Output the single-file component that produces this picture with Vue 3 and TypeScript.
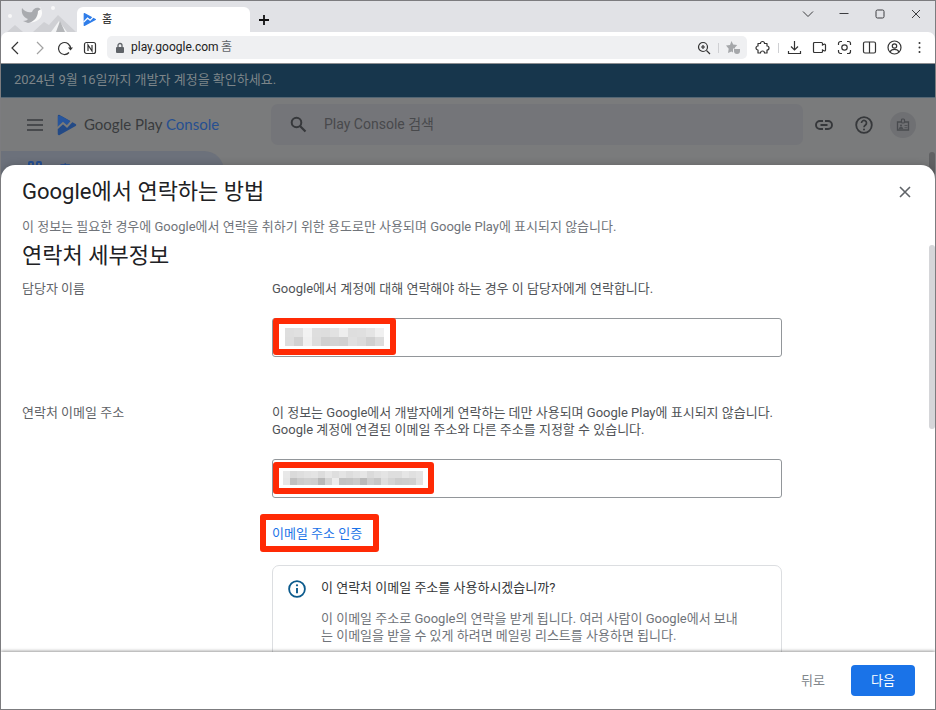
<script setup lang="ts">
import { ref } from 'vue'

interface Cell {
  x: number
  y: number
  fill: string
}

const gray = (v: number): string => `rgb(${v}, ${v}, ${v})`

const toCells = (rows: number[][], size: number): Cell[] =>
  rows.flatMap((row, r) => row.map((v, c) => ({ x: c * size, y: r * size, fill: gray(v) })))

const nameCells = toCells(
  [
    [222, 224, 242, 222, 221, 226, 238, 222, 223, 228, 240],
    [221, 209, 240, 221, 208, 211, 209, 224, 219, 208, 220],
  ],
  9,
)

const mailCells = toCells(
  [
    [232, 218, 222, 226, 228, 220, 230, 222, 228, 221, 226, 230, 218, 224, 228, 222, 222, 230, 224, 228],
    [230, 192, 204, 208, 206, 184, 212, 236, 194, 196, 202, 186, 206, 198, 222, 212, 204, 206, 208, 226],
  ],
  7,
)

const address = ref('play.google.com')
const query = ref('')
const contactName = ref('')
const contactEmail = ref('')
</script>

<template>
  <div class="window">
    <header class="tabbar">
      <svg class="skin" width="76" height="31" viewBox="0 0 76 31" aria-hidden="true">
        <path d="M6 31 14 24 22 31Z" fill="#cfd0d4" />
        <path d="M32 31 43 21 48 24 57 14 75 31Z" fill="#cfd0d4" />
        <path d="M50 31 58 20 66 31Z" fill="#f2f3f4" />
        <path d="M55 31 59 20 64 31Z" fill="#b4b6b9" />
        <circle cx="9" cy="15" r="2" fill="#f7f7f8" />
        <circle cx="52" cy="7" r="2" fill="#f7f7f8" />
        <path d="M39 6c3 4 3 10-2 13-4 3-9 3-12 1 7-2 10-6 14-14Z" fill="#fafafa" />
        <path d="M21 7c3 4 7 5 10 4 1-3 4-5 7-4l2 1-3 2c0 6-4 11-10 12l-5-2c3 0 4-1 5-2-5-2-7-6-6-11Z" fill="#a9abaf" />
      </svg>
      <div class="tab">
        <svg width="13" height="13" viewBox="0 0 20 20" aria-hidden="true">
          <path d="M2 1 19 10 2 19Z" fill="#2f7de9" stroke="#2f7de9" stroke-width="2" stroke-linejoin="round" />
          <path d="M1 14 7 8l4 3 5-5" fill="none" stroke="#fff" stroke-width="2" />
        </svg>
        <span>홈</span>
      </div>
      <button class="newtab" type="button" aria-label="새 탭">
        <svg width="12" height="12" viewBox="0 0 12 12"><path d="M6 1v10M1 6h10" stroke="#111" stroke-width="1.8" /></svg>
      </button>
      <div class="controls">
        <button type="button" aria-label="탭 목록"><svg width="12" height="12" viewBox="0 0 12 12"><path d="M1 3.500l5 5 5-5" /></svg></button>
        <button type="button" aria-label="최소화"><svg width="12" height="12" viewBox="0 0 12 12"><path d="M1.500 5.500h9" /></svg></button>
        <button type="button" aria-label="최대화"><svg width="12" height="12" viewBox="0 0 12 12"><rect x="2" y="2" width="8" height="8" rx="1.500" /></svg></button>
        <button type="button" aria-label="창 닫기"><svg width="12" height="12" viewBox="0 0 12 12"><path d="M2 2l8 8M10 2l-8 8" /></svg></button>
      </div>
    </header>

    <div class="toolbar">
      <div class="navs">
        <button type="button" aria-label="뒤로 가기"><svg width="16" height="16" viewBox="0 0 16 16"><path d="M11 2 5 8l6 6" /></svg></button>
        <button type="button" class="faded" aria-label="앞으로 가기"><svg width="16" height="16" viewBox="0 0 16 16"><path d="M5 2l6 6-6 6" /></svg></button>
        <button type="button" aria-label="새로고침">
          <svg width="16" height="16" viewBox="0 0 16 16"><path d="M12 12.500A6 6 0 1 1 13.500 8.500" /><path d="M11 7.500h5l-2.500 3Z" fill="#333" stroke="none" /></svg>
        </button>
        <button type="button" aria-label="네이버">
          <svg width="16" height="16" viewBox="0 0 16 16"><rect x="2.500" y="2.500" width="11" height="11" rx="2" /><path d="M6 11V5l4 6V5" /></svg>
        </button>
      </div>
      <div class="omnibox">
        <svg width="10" height="12" viewBox="0 0 10 12" aria-hidden="true"><rect x="1" y="5" width="8" height="6" rx="1" fill="#5f6368" /><path d="M3 5V3.500a2 2 0 0 1 4 0V5" fill="none" stroke="#5f6368" stroke-width="1.300" /></svg>
        <input v-model="address" class="address" type="text" aria-label="주소창" />
        <span class="pagename">홈</span>
        <svg class="line" width="14" height="14" viewBox="0 0 14 14" aria-hidden="true"><circle cx="6" cy="6" r="4.500" /><path d="M9.500 9.500l3.500 3.500M4 6h4M6 4v4" /></svg>
        <i class="sep"></i>
        <svg width="14" height="13" viewBox="0 0 14 13" aria-hidden="true"><path d="M5.500 0 7.200 3.500l4 .5L9 6.500v1H7v4l-1.500-1L2 12l.7-4.200L0 4.500l4-.6Z" fill="#a5a7aa" /><path d="M8 8h6v2a3 3 0 0 1-6 0Z" fill="#a5a7aa" /></svg>
      </div>
      <div class="tools">
        <button type="button" aria-label="확장앱"><svg width="15" height="15" viewBox="0 0 15 15"><path d="M3 3.500h2.500a2 2 0 1 1 4 0H12V6a1.800 1.800 0 1 1 0 4v3H9.500a2 2 0 0 0-4 0H3V10a2 2 0 0 1 0-4Z" stroke-linejoin="round" /></svg></button>
        <i class="sep"></i>
        <button type="button" aria-label="다운로드"><svg width="15" height="15" viewBox="0 0 15 15"><path d="M7.500 1v9M4 6.500 7.500 10 11 6.500M1.500 11v2.500h12V11" /></svg></button>
        <button type="button" aria-label="동영상"><svg width="15" height="15" viewBox="0 0 15 15"><path d="M2.500 2.500h7a1 1 0 0 1 1 1V5l2-1c1 0 1 0 1 1v5c0 1 0 1-1 1l-2-1v1.500a1 1 0 0 1-1 1h-7a1 1 0 0 1-1-1v-8a1 1 0 0 1 1-1Z" /></svg></button>
        <button type="button" aria-label="캡처"><svg width="15" height="15" viewBox="0 0 15 15"><path d="M1.500 5V3.500a2 2 0 0 1 2-2H5M10 1.500h1.500a2 2 0 0 1 2 2V5M13.500 10v1.500a2 2 0 0 1-2 2H10M5 13.500H3.500a2 2 0 0 1-2-2V10" /><circle cx="7.500" cy="7.500" r="2.700" /></svg></button>
        <button type="button" aria-label="듀얼 탭"><svg width="15" height="15" viewBox="0 0 15 15"><rect x="1.500" y="2" width="12" height="11" rx="1.500" /><path d="M7.500 2v11" /></svg></button>
        <button type="button" aria-label="프로필"><svg width="15" height="15" viewBox="0 0 15 15"><circle cx="7.500" cy="7.500" r="6.500" /><circle cx="7.500" cy="6" r="2.200" /><path d="M3 12c1.500-3.500 7.500-3.500 9 0" /></svg></button>
        <button type="button" aria-label="더보기"><svg width="15" height="15" viewBox="0 0 15 15"><g fill="#333" stroke="none"><circle cx="7.500" cy="3" r="1" /><circle cx="7.500" cy="7.500" r="1" /><circle cx="7.500" cy="12" r="1" /></g></svg></button>
      </div>
    </div>

    <main class="page">
      <p class="banner">2024년 9월 16일까지 개발자 계정을 확인하세요.</p>
      <div class="appbar">
        <button class="menu" type="button" aria-label="메뉴">
          <svg width="16" height="12" viewBox="0 0 16 12"><path d="M0 1h16M0 6h16M0 11h16" stroke="#393b3e" stroke-width="1.500" /></svg>
        </button>
        <a class="brand" href="#">
          <svg width="20" height="22" viewBox="0 0 20 22" aria-hidden="true">
            <path d="M2 2 18 11 2 20Z" fill="#234a86" stroke="#234a86" stroke-width="2.500" stroke-linejoin="round" />
            <path d="M1 7V2l3 0 9 5-3 4-4-3-5 5Z" fill="#27559c" />
            <path d="M0 14.500 6 9l4 3.500 5-5.500" fill="none" stroke="#7a7b7c" stroke-width="2" />
          </svg>
          <span>Google Play <b>Console</b></span>
        </a>
        <div class="search">
          <svg width="17" height="17" viewBox="0 0 17 17" aria-hidden="true"><circle cx="6.500" cy="6.500" r="4.800" fill="none" stroke="#36383b" stroke-width="2" /><path d="M10 10l5.500 5.500" stroke="#36383b" stroke-width="2.200" /></svg>
          <input v-model="query" type="text" placeholder="Play Console 검색" aria-label="Play Console 검색" />
        </div>
        <div class="actions">
          <button type="button" aria-label="링크"><svg width="18" height="10" viewBox="0 0 18 10"><path d="M8 1H5a4 4 0 0 0 0 8h3M10 1h3a4 4 0 0 1 0 8h-3M5.500 5h7" fill="none" stroke="#36383b" stroke-width="1.900" /></svg></button>
          <button type="button" aria-label="도움말"><svg width="18" height="18" viewBox="0 0 18 18"><circle cx="9" cy="9" r="7.800" fill="none" stroke="#36383b" stroke-width="1.800" /><path d="M6.500 7a2.500 2.500 0 1 1 4 2C9.500 9.800 9 10.200 9 11.200" fill="none" stroke="#36383b" stroke-width="1.700" /><circle cx="9" cy="13.500" r="1" fill="#36383b" /></svg></button>
          <button class="badge" type="button" aria-label="개발자 계정"><svg width="14" height="13" viewBox="0 0 14 13"><path d="M5 4H1.500v8h11V4H9" fill="none" stroke="#494b4f" stroke-width="1.300" /><rect x="5.500" y="1" width="3" height="4" rx="1" fill="none" stroke="#494b4f" stroke-width="1.200" /><circle cx="5" cy="7.500" r="1" fill="#494b4f" /><path d="M3 10.500c.5-1.600 3.500-1.600 4 0ZM8.500 7.500h3M8.500 9.700h3" fill="#494b4f" stroke="#494b4f" stroke-width=".8" /></svg></button>
        </div>
      </div>
      <nav class="side">
        <a href="#">
          <svg width="16" height="16" viewBox="0 0 16 16" aria-hidden="true"><g fill="none" stroke="#264f91" stroke-width="2"><rect x="2" y="1" width="4" height="6" rx="1" /><rect x="10" y="1" width="4" height="4" rx="1" /><rect x="2" y="11" width="4" height="4" rx="1" /><rect x="10" y="9" width="4" height="6" rx="1" /></g></svg>
          <span>홈</span>
        </a>
      </nav>
      <i class="pagescroll"></i>

      <section class="dialog" role="dialog" aria-labelledby="dialog-title">
        <div class="head">
          <h1 id="dialog-title">Google에서 연락하는 방법</h1>
          <button class="close" type="button" aria-label="닫기"><svg width="12" height="12" viewBox="0 0 12 12"><path d="M1 1l10 10M11 1 1 11" stroke="#5f6368" stroke-width="1.600" /></svg></button>
        </div>
        <p class="intro">이 정보는 필요한 경우에 Google에서 연락을 취하기 위한 용도로만 사용되며 Google Play에 표시되지 않습니다.</p>
        <div class="body">
          <h2>연락처 세부정보</h2>
          <div class="row">
            <label for="contact-name">담당자 이름</label>
            <div class="field">
              <p>Google에서 계정에 대해 연락해야 하는 경우 이 담당자에게 연락합니다.</p>
              <div class="box">
                <input id="contact-name" v-model="contactName" type="text" />
                <div class="mark name">
                  <svg width="99" height="18" viewBox="0 0 99 18" aria-hidden="true"><rect v-for="(c, i) in nameCells" :key="i" :x="c.x" :y="c.y" width="9" height="9" :fill="c.fill" /></svg>
                </div>
              </div>
            </div>
          </div>
          <div class="row">
            <label for="contact-email">연락처 이메일 주소</label>
            <div class="field">
              <p>이 정보는 Google에서 개발자에게 연락하는 데만 사용되며 Google Play에 표시되지 않습니다.<br />Google 계정에 연결된 이메일 주소와 다른 주소를 지정할 수 있습니다.</p>
              <div class="box">
                <input id="contact-email" v-model="contactEmail" type="email" />
                <div class="mark mail">
                  <svg width="140" height="14" viewBox="0 0 140 14" aria-hidden="true"><rect v-for="(c, i) in mailCells" :key="i" :x="c.x" :y="c.y" width="7" height="7" :fill="c.fill" /></svg>
                </div>
              </div>
              <button class="verify" type="button">이메일 주소 인증<i class="mark link"></i></button>
              <aside class="info">
                <svg width="18" height="18" viewBox="0 0 18 18" aria-hidden="true"><circle cx="9" cy="9" r="7.900" fill="none" stroke="#0b5a8c" stroke-width="1.800" /><path d="M9 8v5.200" stroke="#0b5a8c" stroke-width="1.900" /><circle cx="9" cy="5.300" r="1.100" fill="#0b5a8c" /></svg>
                <div>
                  <h3>이 연락처 이메일 주소를 사용하시겠습니까?</h3>
                  <p>이 이메일 주소로 Google의 연락을 받게 됩니다. 여러 사람이 Google에서 보내는 이메일을 받을 수 있게 하려면 메일링 리스트를 사용하면 됩니다.</p>
                </div>
              </aside>
            </div>
          </div>
          <i class="thumb"></i>
        </div>
        <footer class="foot">
          <button class="back" type="button">뒤로</button>
          <button class="next" type="button">다음</button>
        </footer>
      </section>
    </main>
  </div>
</template>

<style>
body {
  margin: 0;
}
</style>

<style scoped>
.window,
.window * {
  box-sizing: border-box;
}
.window {
  display: flex;
  flex-direction: column;
  height: 100vh;
  border: 1px solid #7c7c7f;
  background: #e1e2e6;
  overflow: hidden;
  font-family: Roboto, "Noto Sans CJK KR", sans-serif;
  font-size: 13px;
  line-height: 17px;
  color: #5f6368;
}
h1,
h2,
h3,
p {
  margin: 0;
  font-weight: 400;
}
button {
  display: flex;
  align-items: center;
  justify-content: center;
  padding: 0;
  border: 0;
  background: none;
  font: inherit;
  color: inherit;
}
svg {
  display: block;
  flex: none;
}
input {
  min-width: 0;
  padding: 0;
  border: 0;
  outline: 0;
  background: none;
  font: inherit;
  color: inherit;
}
a {
  color: inherit;
  text-decoration: none;
}
.tabbar {
  display: flex;
  flex: none;
  height: 31px;
}
.tab {
  display: flex;
  align-items: center;
  gap: 6px;
  width: 173px;
  height: 25px;
  margin-top: 6px;
  padding-left: 6px;
  border-radius: 6px 6px 0 0;
  background: #fff;
  color: #111;
  font-size: 11px;
}
.newtab {
  width: 28px;
  margin-top: 6px;
}
.controls {
  display: flex;
  gap: 12px;
  margin-left: auto;
  padding: 0 7px 6px 0;
}
.controls button {
  width: 24px;
}
.controls svg {
  fill: none;
  stroke: #3c3d40;
}
.toolbar {
  display: flex;
  align-items: center;
  flex: none;
  height: 32px;
  padding: 0 8px 0 6px;
  border-bottom: 1px solid #8d8e91;
  border-radius: 7px 7px 0 0;
  background: #fff;
}
.navs {
  display: flex;
  gap: 9px;
}
.navs svg,
.tools svg,
.line {
  fill: none;
  stroke: #333;
  stroke-width: 1.2px;
}
.navs .faded {
  opacity: 0.45;
}
.omnibox {
  display: flex;
  flex: 1;
  align-items: center;
  height: 23px;
  margin: 0 8px 0 9px;
  padding: 0 7px 0 8px;
  border-radius: 5px;
  background: #eff0f2;
  font-size: 12px;
}
.address {
  width: 90px;
  margin-left: 6px;
  color: #222;
}
.pagename {
  margin-right: auto;
}
.sep {
  width: 1px;
  height: 10px;
  margin: 0 7px;
  background: #cfd0d3;
}
.tools {
  display: flex;
  align-items: center;
  gap: 10px;
}
.tools .sep {
  margin: 0 -2px;
}
.page {
  position: relative;
  flex: 1;
  min-height: 0;
  background: #7a7b7c;
}
.banner {
  height: 34px;
  padding-left: 13px;
  border-bottom: 1px solid #536674;
  background: #17364c;
  color: #7d8589;
  line-height: 32px;
}
.appbar {
  display: flex;
  align-items: center;
  height: 53px;
  padding: 0 19px 0 26px;
}
.brand {
  display: flex;
  align-items: center;
  gap: 7px;
  width: 214px;
  margin-left: 14px;
  color: #393b3e;
  font-family: Lato, sans-serif;
  font-size: 15px;
}
.brand b {
  color: #264f91;
  font-weight: 400;
}
.search {
  display: flex;
  align-items: center;
  flex: 1;
  gap: 17px;
  height: 41px;
  padding-left: 19px;
  border-radius: 7px;
  background: #747579;
  color: #48494c;
  font-size: 14px;
}
.search input {
  flex: 1;
}
.search input::placeholder {
  color: #48494c;
  opacity: 1;
}
.actions {
  display: flex;
  align-items: center;
  gap: 16px;
  padding-left: 9px;
}
.actions button {
  width: 24px;
  height: 26px;
}
.actions .badge {
  width: 26px;
  margin-left: -2px;
  border-radius: 50%;
  background: #6f7073;
}
.side a {
  display: flex;
  gap: 16px;
  width: 223px;
  height: 41px;
  padding: 10px 0 0 26px;
  border-radius: 0 20px 20px 0;
  background: #6c717b;
  color: #264f91;
}
.pagescroll {
  position: absolute;
  top: 88px;
  right: 0;
  width: 6px;
  height: 40px;
  border-radius: 3px;
  background: #606163;
}
.dialog {
  position: absolute;
  inset: 101px 0 0;
  display: flex;
  flex-direction: column;
  border-radius: 14px 14px 0 0;
  background: #fff;
  box-shadow: 0 0 8px rgba(0, 0, 0, 0.2);
  overflow: hidden;
}
.head {
  display: flex;
  align-items: center;
  justify-content: space-between;
  padding: 13px 18px 0 21px;
}
h1,
h2 {
  color: #202124;
  font-size: 22px;
  line-height: 28px;
}
.close {
  width: 24px;
  height: 24px;
}
.intro {
  padding: 12px 20px 7px 21px;
  color: #70747a;
}
.body {
  position: relative;
  flex: 1;
  min-height: 0;
  padding: 0 21px;
  overflow: hidden;
}
.row {
  display: grid;
  grid-template-columns: 250px minmax(0, 510px);
  padding-top: 10px;
}
.row + .row {
  padding-top: 47px;
}
.row label {
  color: #5f6368;
}
.field > p {
  color: #505357;
}
.box {
  position: relative;
  margin-top: 21px;
}
.box input {
  display: block;
  width: 100%;
  height: 39px;
  padding: 0 12px;
  border: 1px solid #92969a;
  border-radius: 3px;
}
.mark {
  position: absolute;
  border: 6px solid #ff2a05;
  border-radius: 3px;
}
.name {
  top: 0;
  left: 1px;
  padding: 4px 6px 3px;
}
.mail {
  top: 3px;
  left: 1px;
  padding: 3px 5px 3px 4px;
}
.verify {
  position: relative;
  margin-top: 26px;
  color: #1a73e8;
  line-height: 20px;
}
.link {
  inset: -10px -17px -8px -12px;
}
.info {
  display: flex;
  gap: 15px;
  margin-top: 21px;
  padding: 13px 40px 16px 15px;
  border: 1px solid #dcdee1;
  border-radius: 7px;
  color: #70747a;
}
.info svg {
  margin-top: 1px;
}
.info h3 {
  margin-bottom: 14px;
  color: #35373a;
  font-size: 13px;
}
.info p {
  word-break: break-all;
}
.thumb {
  position: absolute;
  top: 3px;
  right: 0;
  width: 6px;
  height: 184px;
  border-radius: 3px;
  background: #d5d6d9;
}
.foot {
  position: relative;
  display: flex;
  align-items: center;
  justify-content: flex-end;
  gap: 26px;
  height: 57px;
  padding-right: 20px;
  background: #fff;
  box-shadow: 0 -1px 3px rgba(0, 0, 0, 0.4);
}
.back {
  color: #80868b;
}
.next {
  width: 64px;
  height: 31px;
  border-radius: 4px;
  background: #1a73e8;
  color: #fff;
}
</style>
